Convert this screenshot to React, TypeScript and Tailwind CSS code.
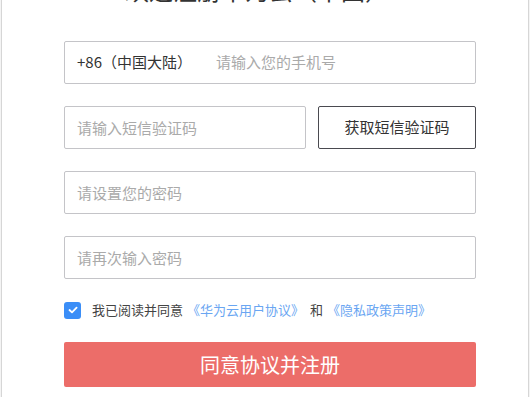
import React, { useState } from "react";

const font = { fontFamily: '"Noto Sans CJK SC", "Liberation Sans", sans-serif' };

export default function App() {
  const [agreed, setAgreed] = useState(true);

  return (
    <div className="w-[530px] h-[397px] overflow-hidden bg-[#f4f4f4] px-px" style={font}>
      <div className="h-full flex flex-col bg-white border-x border-[#d6d6d6]">
        {/* title, mostly scrolled out of view */}
        <div className="-mt-[26px] h-[32px] pl-[123px] text-[24px] leading-[32px] text-[#333] whitespace-nowrap">
          欢迎注册华为云（中国）
        </div>

        <div className="pl-[62px] pt-[35px] w-[474px] flex flex-col">
          <div className="h-[43px] flex items-center border border-[#c4c4c8] rounded-[2px] px-[12px] text-[15px]">
            <span className="text-[#333] w-[139px]">+86（中国大陆）</span>
            <input
              className="flex-1 outline-none placeholder:text-[#aaa] text-[#333]"
              placeholder="请输入您的手机号"
            />
          </div>

          <div className="mt-[22px] flex gap-[12px]">
            <input
              className="w-[242px] h-[43px] border border-[#c4c4c8] rounded-[2px] px-[12px] text-[15px] outline-none placeholder:text-[#aaa]"
              placeholder="请输入短信验证码"
            />
            <button className="flex-1 h-[43px] border border-[#4a4a50] rounded-[2px] text-[15px] text-[#333]">
              获取短信验证码
            </button>
          </div>

          <input
            type="password"
            className="mt-[22px] h-[43px] border border-[#c4c4c8] rounded-[2px] px-[12px] text-[15px] outline-none placeholder:text-[#aaa]"
            placeholder="请设置您的密码"
          />
          <input
            type="password"
            className="mt-[22px] h-[43px] border border-[#c4c4c8] rounded-[2px] px-[12px] text-[15px] outline-none placeholder:text-[#aaa]"
            placeholder="请再次输入密码"
          />

          <div className="mt-[22px] h-[18px] flex items-center text-[13px]">
            <button
              onClick={() => setAgreed(!agreed)}
              className={`w-[17px] h-[17px] rounded-[3px] flex items-center justify-center ${
                agreed ? "bg-[#3b8ef7]" : "border border-[#c8c8cc] bg-white"
              }`}
            >
              {agreed && (
                <svg width="10" height="8" viewBox="0 0 10 8" fill="none">
                  <path d="M1.5 4l2.5 2.4L8.6 1.6" stroke="white" strokeWidth="1.8" strokeLinecap="round" strokeLinejoin="round" />
                </svg>
              )}
            </button>
            <span className="ml-[11px] text-[#444]">我已阅读并同意</span>
            <span className="ml-[4px] text-[#6aa6f2]">《华为云用户协议》</span>
            <span className="ml-[6px] text-[#444]">和</span>
            <span className="ml-[4px] text-[#6aa6f2]">《隐私政策声明》</span>
          </div>

          <button className="mt-[23px] h-[45px] shrink-0 rounded-[2px] bg-[#ec6d69] text-white text-[20px]">
            同意协议并注册
          </button>
        </div>
      </div>
    </div>
  );
}
